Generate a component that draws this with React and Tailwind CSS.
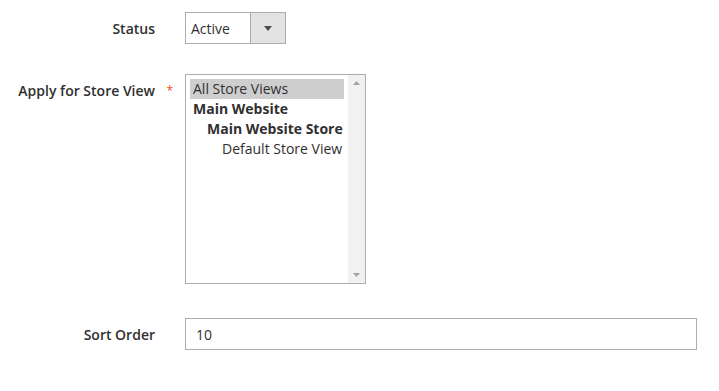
export default function App() {
  return (
    <div className="w-[719px] h-[391px] bg-white text-[14px] text-[#303030] font-['Open_Sans',sans-serif] pt-[12px]">
      {/* Status */}
      <div className="flex items-center h-[32px]">
        <div className="w-[185px] pr-[30px] text-right font-semibold">Status</div>
        <div className="flex h-[32px] w-[101px] border border-[#adadad] bg-white">
          <div className="flex-1 flex items-center pl-[5px] text-[#303030]">Active</div>
          <div className="w-[35px] bg-[#e3e3e3] border-l border-[#adadad] flex items-center justify-center">
            <svg width="8" height="5" viewBox="0 0 8 5"><path d="M0 0H8L4 5Z" fill="#514943" /></svg>
          </div>
        </div>
      </div>

      {/* Apply for Store View */}
      <div className="flex mt-[30px]">
        <div className="w-[185px] pr-[30px] text-right font-semibold relative pt-[6px]">
          Apply for Store View
          <span className="absolute right-[12px] top-[8px] text-[12px] text-[#eb5202] font-normal">*</span>
        </div>
        <div className="relative h-[210px] w-[181px] border border-[#adadad] bg-white flex">
          <div className="flex-1 pt-[4px] pl-[4px] pr-[4px]">
            <div className="h-[20px] leading-[20px] bg-[#cecece] pl-[3px] text-[#303030]">All Store Views</div>
            <div className="h-[20px] leading-[20px] pl-[3px] font-bold">Main Website</div>
            <div className="h-[20px] leading-[20px] pl-[17px] font-bold">Main Website Store</div>
            <div className="h-[20px] leading-[20px] pl-[32px]">Default Store View</div>
          </div>
          <div className="w-[17px] bg-[#f1f1f1] flex flex-col items-center justify-between py-[6px]">
            <svg width="7" height="4" viewBox="0 0 7 4"><path d="M0 4H7L3.5 0Z" fill="#a3a3a3" /></svg>
            <svg width="7" height="4" viewBox="0 0 7 4"><path d="M0 0H7L3.5 4Z" fill="#a3a3a3" /></svg>
          </div>
        </div>
      </div>

      {/* Sort Order */}
      <div className="flex items-center mt-[34px]">
        <div className="w-[185px] pr-[30px] text-right font-semibold">Sort Order</div>
        <div className="h-[32px] w-[512px] border border-[#adadad] flex items-center pl-[10px]">10</div>
      </div>
    </div>
  );
}
